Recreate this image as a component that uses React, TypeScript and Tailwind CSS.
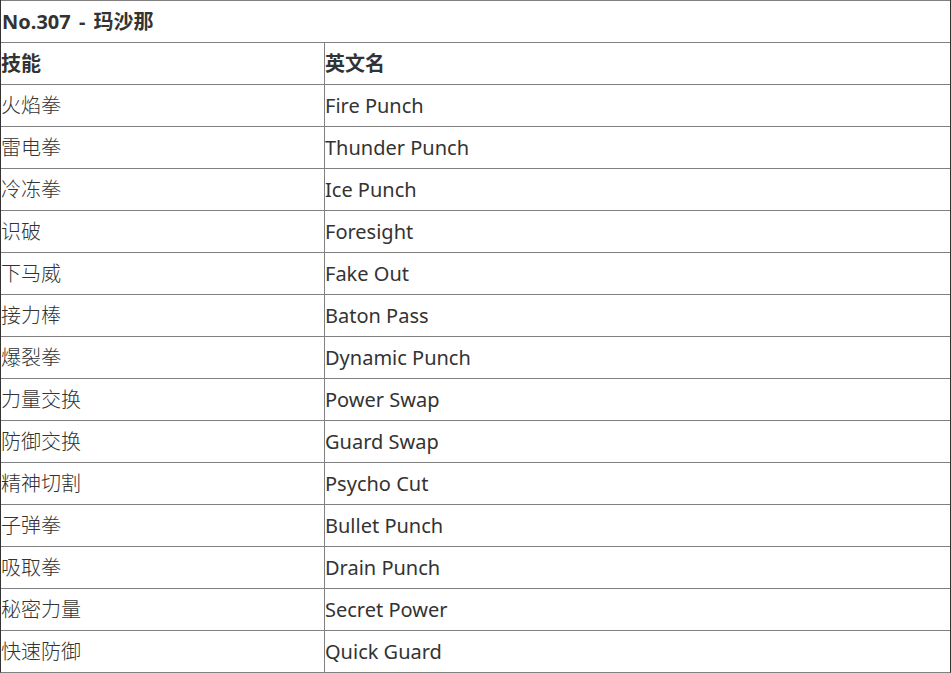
const rows: [string, string][] = [
  ["火焰拳", "Fire Punch"],
  ["雷电拳", "Thunder Punch"],
  ["冷冻拳", "Ice Punch"],
  ["识破", "Foresight"],
  ["下马威", "Fake Out"],
  ["接力棒", "Baton Pass"],
  ["爆裂拳", "Dynamic Punch"],
  ["力量交换", "Power Swap"],
  ["防御交换", "Guard Swap"],
  ["精神切割", "Psycho Cut"],
  ["子弹拳", "Bullet Punch"],
  ["吸取拳", "Drain Punch"],
  ["秘密力量", "Secret Power"],
  ["快速防御", "Quick Guard"],
];

export default function App() {
  return (
    <div
      className="w-[951px] bg-white text-[20px] text-[#333] border-x border-[#333] border-b border-b-[#808080]"
      style={{ fontFamily: '"Noto Sans", "Noto Sans CJK SC", sans-serif' }}
    >
      <div className="h-[42px] border-t border-[#808080] flex items-center pl-px font-bold [word-spacing:3px]">
        No.307 - 玛沙那
      </div>
      <div className="grid grid-cols-[324px_1fr] h-[42px] border-t border-[#808080] font-bold">
        <div className="flex items-center border-r border-[#808080]">技能</div>
        <div className="flex items-center">英文名</div>
      </div>
      {rows.map(([cn, en]) => (
        <div key={en} className="grid grid-cols-[324px_1fr] h-[42px] border-t border-[#808080]">
          <div className="flex items-center border-r border-[#808080] font-light">{cn}</div>
          <div className="flex items-center">{en}</div>
        </div>
      ))}
    </div>
  );
}
